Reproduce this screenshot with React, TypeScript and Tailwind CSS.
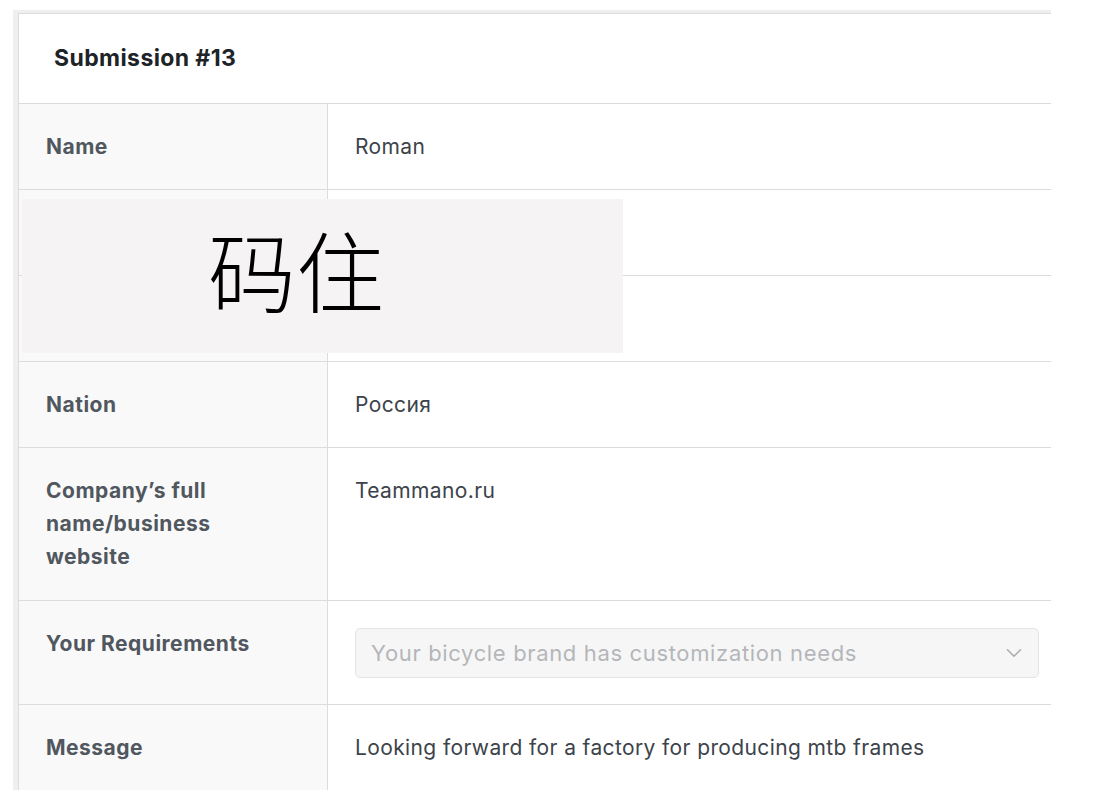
import { ChevronDown } from 'lucide-react'

type Row = {
  label: string
  value?: string
  select?: string
  extra?: string
}

const rows: Row[] = [
  { label: 'Name', value: 'Roman' },
  { label: 'Email', value: '' },
  { label: 'Phone', value: '' },
  { label: 'Nation', value: 'Россия' },
  { label: 'Company’s full name/business website', value: 'Teammano.ru', extra: 'pb-[27px]' },
  { label: 'Your Requirements', select: 'Your bicycle brand has customization needs' },
  { label: 'Message', value: 'Looking forward for a factory for producing mtb frames' },
]

function SelectBox({ text }: { text: string }) {
  return (
    <div className="mt-[1px] flex h-[50px] items-center justify-between rounded-[5px] border border-[#e4e4e6] bg-[#f6f6f7] pl-[15px] pr-[11px]">
      <span className="text-[22px] tracking-[0.65px] text-[#b4b6b9]">{text}</span>
      <ChevronDown className="h-[26px] w-[26px] text-[#a9abae]" strokeWidth={1.4} />
    </div>
  )
}

export default function App() {
  return (
    <div
      className="relative h-[808px] w-[1106px] overflow-hidden bg-white pl-[13px] pt-[10px]"
      style={{ fontFamily: 'Inter, "Noto Sans", sans-serif' }}
    >
      {/* card frame */}
      <div className="h-[780px] w-[1038px] border-l-[5px] border-t-[3px] border-[#efeff0]">
        <div className="h-full w-full overflow-hidden border-l border-t border-[#dcdcde] bg-white">
          <div className="flex h-[90px] items-center border-b border-[#dcdcde] pl-[35px]">
            <h2 className="text-[23px] font-bold tracking-[0.4px] text-[#1d2327]">Submission #13</h2>
          </div>

          {rows.map((r) => (
            <div key={r.label} className="flex border-b border-[#dcdcde]">
              <div
                className={`w-[309px] shrink-0 border-r border-[#dcdcde] bg-[#f9f9f9] py-[26px] pl-[27px] pr-[40px] ${r.extra ?? ''}`}
              >
                <div className="text-[21px] font-bold leading-[33px] tracking-[0.5px] text-[#50575e]">
                  {r.label}
                </div>
              </div>
              <div className="flex-1 py-[26px] pl-[27px] pr-[12px]">
                {r.select ? (
                  <SelectBox text={r.select} />
                ) : (
                  <div className="min-h-[33px] text-[21px] leading-[33px] tracking-[0.38px] text-[#3c434a]">
                    {r.value}
                  </div>
                )}
              </div>
            </div>
          ))}
        </div>
      </div>

      {/* watermark overlay */}
      <div className="absolute left-[22px] top-[199px] flex h-[154px] w-[601px] items-center bg-[#f5f3f4] pb-[16px] pl-[186px]">
        <span
          className="text-[88px] font-light leading-none text-black"
          style={{ fontFamily: '"Noto Sans CJK SC", serif' }}
        >
          码住
        </span>
      </div>
    </div>
  )
}
